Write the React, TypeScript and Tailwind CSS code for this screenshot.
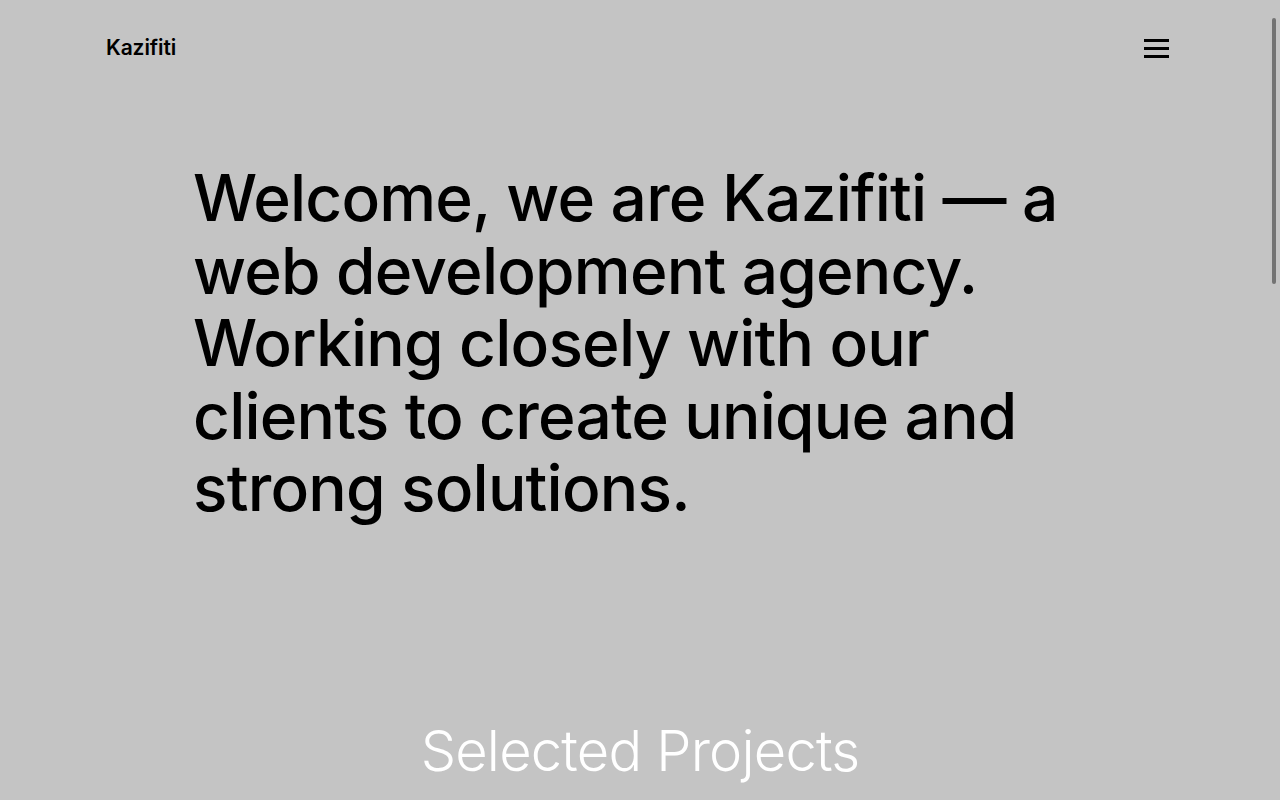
export default function App() {
  return (
    <div className="relative h-screen overflow-hidden bg-[#c4c4c4] font-['Inter','Noto_Sans',sans-serif] text-black">
      {/* Header */}
      <header className="flex h-[96px] items-center justify-between pl-[106px] pr-[111px]">
        <a className="text-[21px] font-semibold tracking-[-0.1px]">Kazifiti</a>
        <button className="flex w-[25px] flex-col gap-[5px]" aria-label="menu">
          <span className="block h-[3px] w-full bg-black"></span>
          <span className="block h-[3px] w-full bg-black"></span>
          <span className="block h-[3px] w-full bg-black"></span>
        </button>
      </header>

      {/* Hero */}
      <section className="pl-[193px] pt-[66px]">
        <h1 className="max-w-[880px] text-[64px] font-medium leading-[72.5px] tracking-[-0.8px]">
          Welcome, we are Kazifiti — a web development agency. Working closely with our clients to create unique and
          strong solutions.
        </h1>
      </section>

      {/* Projects */}
      <section className="mt-[184px] text-center">
        <h2 className="text-[56px] font-light tracking-[-0.8px] text-white">Selected Projects</h2>
      </section>

      {/* Scrollbar */}
      <div className="absolute right-[4px] top-[18px] h-[266px] w-[4px] rounded-full bg-[#737373]"></div>
    </div>
  );
}
